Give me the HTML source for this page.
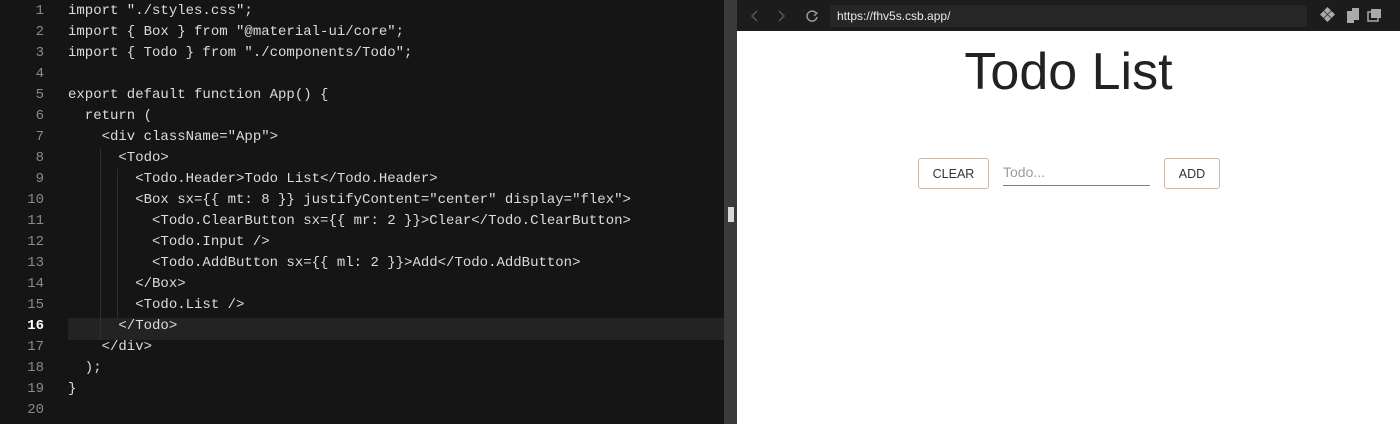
<!DOCTYPE html>
<html><head><style>
*{margin:0;padding:0;box-sizing:border-box}
body{width:1400px;height:424px;overflow:hidden;background:#151515;position:relative;font-family:"Liberation Sans",sans-serif}
#ed{position:absolute;left:0;top:0;width:724px;height:424px;background:#151515}
.ln{position:absolute;left:0;width:44px;text-align:right;color:#8a8a8a;font:14px/21px "Liberation Mono",monospace}
.code{position:absolute;left:68px;color:#dcdcdc;font:14px/21px "Liberation Mono",monospace;white-space:pre}
.row{height:21px}
#cur{position:absolute;left:68px;top:318px;width:656px;height:22px;background:#232323}
#div{position:absolute;left:724px;top:0;width:13px;height:424px;background:#3b3a39}
#br{position:absolute;left:737px;top:0;width:663px;height:424px;background:#fff}
#tb{position:absolute;left:0;top:0;width:663px;height:31px;background:#1c1c1c}
#url{position:absolute;left:93px;top:5px;width:477px;height:22px;background:#262626;color:#e8e8e8;font-size:12px;line-height:22px;padding-left:7px}
h1{position:absolute;left:0;width:663px;top:42px;text-align:center;font-weight:300;font-size:52px;color:#222;line-height:60px;font-family:"Liberation Sans",sans-serif}
.btn{position:absolute;top:158px;height:31px;border:1px solid #c9b8ad;border-radius:3px;font-size:12.5px;color:#333;text-align:center;line-height:31px}
</style></head><body>
<div id="ed">
<div id="cur"></div>
<div style="position:absolute;left:100px;top:148px;width:1px;height:192px;background:#2e2e2e"></div>
<div style="position:absolute;left:117px;top:169px;width:1px;height:149px;background:#2e2e2e"></div>
<div class="ln" style="top:1px">
<div class="row">1</div><div class="row">2</div><div class="row">3</div><div class="row">4</div><div class="row">5</div><div class="row">6</div><div class="row">7</div><div class="row">8</div><div class="row">9</div><div class="row">10</div><div class="row">11</div><div class="row">12</div><div class="row">13</div><div class="row">14</div><div class="row">15</div><div class="row" style="color:#fff;font-weight:bold">16</div><div class="row">17</div><div class="row">18</div><div class="row">19</div><div class="row">20</div>
</div>
<div class="code" style="top:1px">import "./styles.css";
import { Box } from "@material-ui/core";
import { Todo } from "./components/Todo";

export default function App() {
  return (
    &lt;div className="App"&gt;
      &lt;Todo&gt;
        &lt;Todo.Header&gt;Todo List&lt;/Todo.Header&gt;
        &lt;Box sx={{ mt: 8 }} justifyContent="center" display="flex"&gt;
          &lt;Todo.ClearButton sx={{ mr: 2 }}&gt;Clear&lt;/Todo.ClearButton&gt;
          &lt;Todo.Input /&gt;
          &lt;Todo.AddButton sx={{ ml: 2 }}&gt;Add&lt;/Todo.AddButton&gt;
        &lt;/Box&gt;
        &lt;Todo.List /&gt;
      &lt;/Todo&gt;
    &lt;/div&gt;
  );
}
</div>
</div>
<div id="div"><div style="position:absolute;left:4px;top:207px;width:6px;height:15px;background:#d8d8d8"></div></div>
<div id="br">
<div id="tb">
<svg style="position:absolute;left:12px;top:8px" width="80" height="16"><path d="M8 3 L3 8 L8 13" stroke="#555" stroke-width="1.5" fill="none"/><path d="M30 3 L35 8 L30 13" stroke="#555" stroke-width="1.5" fill="none"/><path d="M67 5 A5 5 0 1 0 68 9" stroke="#999" stroke-width="1.5" fill="none"/><path d="M64 3 L68 5 L65 8" stroke="#999" stroke-width="1.3" fill="none"/></svg>
<div id="url">https://fhv5s.csb.app/</div>
<svg style="position:absolute;left:583px;top:6px" width="80" height="20"><g fill="#aaa"><rect x="5" y="2" width="5" height="5" transform="rotate(45 7.5 4.5)"/><rect x="1" y="6" width="5" height="5" transform="rotate(45 3.5 8.5)"/><rect x="9" y="6" width="5" height="5" transform="rotate(45 11.5 8.5)"/><rect x="5" y="10" width="5" height="5" transform="rotate(45 7.5 12.5)"/><rect x="27" y="5" width="7" height="12"/><rect x="32" y="2" width="7" height="12"/><rect x="48" y="6" width="10" height="9" fill="none" stroke="#aaa" stroke-width="1.5"/><rect x="51" y="3" width="10" height="9"/></g></svg>
</div>
<h1>Todo List</h1>
<div class="btn" style="left:181px;width:71px">CLEAR</div>
<div style="position:absolute;left:266px;top:164px;color:#a39a92;font-size:14px">Todo...</div>
<div style="position:absolute;left:266px;top:185px;width:147px;height:1px;background:#8b7d74"></div>
<div class="btn" style="left:427px;width:56px">ADD</div>
</div>
</body></html>
